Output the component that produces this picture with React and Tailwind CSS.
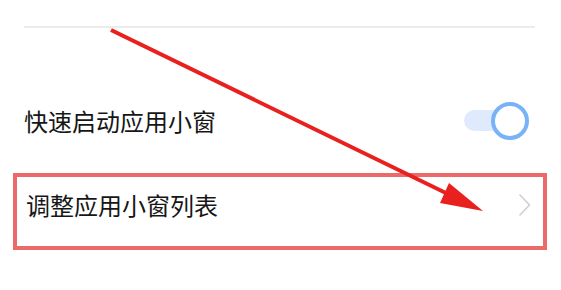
import React from 'react';

const Toggle = () => (
  <div className="relative w-[65px] h-[38px] mr-[32px]">
    <div className="absolute left-0 top-[8px] w-[50px] h-[21px] rounded-full bg-[#dfeafc]" />
    <div className="absolute right-0 top-0 w-[38px] h-[38px] rounded-full border-[4px] border-[#78b3f7] bg-white" />
  </div>
);

const Chevron = () => (
  <svg width="13" height="24" viewBox="0 0 13 24" className="mr-[12px]">
    <path d="M1.5 1.5 L11.5 12 L1.5 22.5" fill="none" stroke="#cfcfcf" strokeWidth="1.6" />
  </svg>
);

export default function App() {
  return (
    <div className="relative w-[561px] h-[290px] bg-white overflow-hidden" style={{ fontFamily: '"Noto Sans CJK SC", "Noto Sans", sans-serif' }}>
      <div className="pt-[26px] pl-[24px] pr-[26px]">
        <div className="h-[1.5px] bg-[#ececec]" />
      </div>

      <div className="mt-[57px] h-[72px] flex items-center justify-between pl-[24px]">
        <span className="text-[24px] leading-[24px] text-[#161616]">快速启动应用小窗</span>
        <Toggle />
      </div>

      <div className="mt-[16px] ml-[13px] w-[534px] h-[77px] border-[4px] border-[#ec6a6a] flex items-center justify-between pl-[9px] pb-[12px]">
        <span className="text-[24px] leading-[24px] text-[#161616]">调整应用小窗列表</span>
        <Chevron />
      </div>

      <svg className="absolute inset-0 pointer-events-none" width="561" height="290" viewBox="0 0 561 290">
        <line x1="111" y1="30" x2="450" y2="195" stroke="#e8201e" strokeWidth="4" />
        <polygon points="449,183 483,211 440,203" fill="#e8201e" />
      </svg>
    </div>
  );
}
